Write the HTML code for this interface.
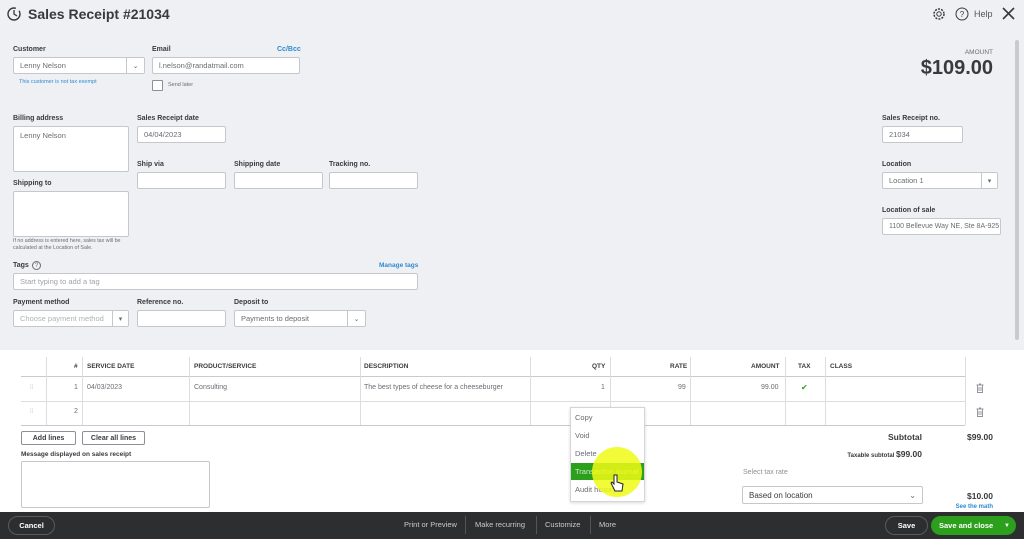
<!DOCTYPE html>
<html><head><meta charset="utf-8"><style>
*{margin:0;padding:0;box-sizing:border-box}
body{width:1024px;height:539px;overflow:hidden;position:relative;background:#fff;font-family:"Liberation Sans",sans-serif;color:#393a3d}
.a{position:absolute;white-space:nowrap}
.top{position:absolute;left:0;top:0;width:1024px;height:350px;background:#eff0f4}
.lbl{position:absolute;font-size:7px;font-weight:bold;color:#393a3d;white-space:nowrap}
.in{position:absolute;background:#fff;border:1px solid #c4c7cc;border-radius:2px;font-size:7.5px;color:#6b6c72;padding:0 6px;display:flex;align-items:center;white-space:nowrap;overflow:hidden}
.dd{position:absolute;top:0;bottom:0;right:0;border-left:1px solid #c4c7cc;display:flex;align-items:center;justify-content:center;font-size:7px;color:#6b6c72;background:#fff}
.th{position:absolute;font-size:6.5px;font-weight:bold;color:#393a3d;top:363px}
.td{position:absolute;font-size:7px;color:#6b6c72;white-space:nowrap}
.vl{position:absolute;width:1px;background:#dcdde0;top:357px;height:68px}
.hl{position:absolute;left:21px;width:944px;height:1px;background:#c8cacd}
.btn{position:absolute;border:1px solid #8d9096;border-radius:2px;font-size:7px;font-weight:bold;display:flex;align-items:center;justify-content:center;background:#fff}
.mi{position:absolute;left:575px;font-size:7.5px;color:#6b6c72;white-space:nowrap}
.ft{position:absolute;font-size:7.5px;color:#c9cacc;top:520px;white-space:nowrap}
.sep{position:absolute;top:516px;width:1px;height:18px;background:#555}
</style></head><body>
<div class="top"></div>
<svg class="a" style="left:6px;top:6px" width="16" height="16" viewBox="0 0 16 16"><circle cx="8" cy="8" r="6" fill="none" stroke="#393a3d" stroke-width="1.4" stroke-dasharray="30 4"/><path d="M8 4v4l3 2" fill="none" stroke="#393a3d" stroke-width="1.3"/></svg>
<div class="a" style="left:28px;top:6px;font-size:14px;font-weight:bold;color:#393a3d">Sales Receipt #21034</div>
<svg class="a" style="left:932px;top:7px" width="14" height="14" viewBox="0 0 14 14"><circle cx="7" cy="7" r="2.2" fill="none" stroke="#393a3d"/><circle cx="7" cy="7" r="5" fill="none" stroke="#393a3d" stroke-dasharray="2 1.2" stroke-width="1.5"/></svg>
<svg class="a" style="left:955px;top:7px" width="14" height="14" viewBox="0 0 14 14"><circle cx="7" cy="7" r="6" fill="none" stroke="#393a3d"/><text x="7" y="10" font-size="8" text-anchor="middle" fill="#393a3d" font-family="Liberation Sans">?</text></svg>
<div class="a" style="left:974px;top:9px;font-size:9px;color:#555">Help</div>
<svg class="a" style="left:1001px;top:6px" width="15" height="15" viewBox="0 0 15 15"><path d="M2 2L13 13M13 2L2 13" stroke="#393a3d" stroke-width="1.6"/></svg>
<div class="a" style="left:1015px;top:40px;width:4px;height:300px;background:#c9cacd;border-radius:2px"></div>

<div class="lbl" style="left:13px;top:46px">Customer</div>
<div class="in" style="left:13px;top:57px;width:132px;height:17px">Lenny Nelson<div class="dd" style="width:18px">⌄</div></div>
<div class="a" style="left:19px;top:79px;font-size:5.5px;color:#2f8bd0">This customer is not tax exempt</div>
<div class="lbl" style="left:152px;top:46px">Email</div>
<div class="a" style="left:277px;top:46px;font-size:7px;font-weight:bold;color:#2f8bd0">Cc/Bcc</div>
<div class="in" style="left:152px;top:57px;width:148px;height:17px">l.nelson@randatmail.com</div>
<div class="a" style="left:152px;top:80px;width:11px;height:11px;border:1px solid #8d9096;background:#fff;border-radius:1px"></div>
<div class="a" style="left:168px;top:82px;font-size:5.5px;color:#6b6c72">Send later</div>
<div class="a" style="right:31px;top:49px;font-size:6.5px;color:#6b6c72">AMOUNT</div>
<div class="a" style="right:31px;top:57px;font-size:20px;font-weight:bold;color:#393a3d">$109.00</div>

<div class="lbl" style="left:13px;top:115px">Billing address</div>
<div class="in" style="left:13px;top:126px;width:116px;height:46px;align-items:flex-start;padding-top:4px">Lenny Nelson</div>
<div class="lbl" style="left:137px;top:115px">Sales Receipt date</div>
<div class="in" style="left:137px;top:126px;width:89px;height:17px">04/04/2023</div>
<div class="lbl" style="left:137px;top:161px">Ship via</div>
<div class="in" style="left:137px;top:172px;width:89px;height:17px"></div>
<div class="lbl" style="left:234px;top:161px">Shipping date</div>
<div class="in" style="left:234px;top:172px;width:89px;height:17px"></div>
<div class="lbl" style="left:329px;top:161px">Tracking no.</div>
<div class="in" style="left:329px;top:172px;width:89px;height:17px"></div>
<div class="lbl" style="left:13px;top:180px">Shipping to</div>
<div class="in" style="left:13px;top:191px;width:116px;height:46px"></div>
<div class="a" style="left:13px;top:238px;font-size:5.3px;color:#6b6c72;line-height:7px">If no address is entered here, sales tax will be<br>calculated at the Location of Sale.</div>
<div class="lbl" style="left:13px;top:262px">Tags</div>
<div class="a" style="left:32px;top:261px;width:9px;height:9px;border:1px solid #6b6c72;border-radius:50%;font-size:6px;text-align:center;line-height:8px;color:#6b6c72">?</div>
<div class="a" style="left:379px;top:262px;font-size:6.5px;font-weight:bold;color:#2f8bd0">Manage tags</div>
<div class="in" style="left:13px;top:273px;width:405px;height:17px;color:#a0a2a6">Start typing to add a tag</div>
<div class="lbl" style="left:13px;top:299px">Payment method</div>
<div class="in" style="left:13px;top:310px;width:116px;height:17px;color:#b0b2b6">Choose payment method<div class="dd" style="width:16px">▾</div></div>
<div class="lbl" style="left:137px;top:299px">Reference no.</div>
<div class="in" style="left:137px;top:310px;width:89px;height:17px"></div>
<div class="lbl" style="left:234px;top:299px">Deposit to</div>
<div class="in" style="left:234px;top:310px;width:132px;height:17px">Payments to deposit<div class="dd" style="width:18px">⌄</div></div>

<div class="lbl" style="left:882px;top:115px">Sales Receipt no.</div>
<div class="in" style="left:882px;top:126px;width:81px;height:17px">21034</div>
<div class="lbl" style="left:882px;top:161px">Location</div>
<div class="in" style="left:882px;top:172px;width:116px;height:17px">Location 1<div class="dd" style="width:16px">▾</div></div>
<div class="lbl" style="left:882px;top:207px">Location of sale</div>
<div class="in" style="left:882px;top:218px;width:119px;height:17px;padding-right:0;font-size:7px">1100 Bellevue Way NE, Ste 8A-925</div>

<div class="hl" style="top:376px"></div>
<div class="hl" style="top:401px;background:#dcdde0"></div>
<div class="hl" style="top:425px"></div>
<div class="vl" style="left:46px"></div><div class="vl" style="left:82px"></div><div class="vl" style="left:189px"></div><div class="vl" style="left:360px"></div><div class="vl" style="left:530px"></div><div class="vl" style="left:610px"></div><div class="vl" style="left:690px"></div><div class="vl" style="left:785px"></div><div class="vl" style="left:825px"></div><div class="vl" style="left:965px"></div>
<div class="th" style="left:74px">#</div>
<div class="th" style="left:87px">SERVICE DATE</div>
<div class="th" style="left:194px">PRODUCT/SERVICE</div>
<div class="th" style="left:364px">DESCRIPTION</div>
<div class="th" style="left:592px">QTY</div>
<div class="th" style="left:670px">RATE</div>
<div class="th" style="left:751px">AMOUNT</div>
<div class="th" style="left:798px">TAX</div>
<div class="th" style="left:830px">CLASS</div>
<div class="td" style="left:30px;top:385px;font-size:6px;color:#bbb">⁞⁞</div>
<div class="td" style="left:74px;top:384px">1</div>
<div class="td" style="left:87px;top:384px">04/03/2023</div>
<div class="td" style="left:194px;top:384px">Consulting</div>
<div class="td" style="left:364px;top:384px">The best types of cheese for a cheeseburger</div>
<div class="td" style="left:601px;top:384px">1</div>
<div class="td" style="left:678px;top:384px">99</div>
<div class="td" style="left:761px;top:384px">99.00</div>
<div class="td" style="left:801px;top:383px;color:#2ca01c;font-size:8px">✔</div>
<div class="td" style="left:30px;top:409px;font-size:6px;color:#bbb">⁞⁞</div>
<div class="td" style="left:74px;top:408px">2</div>
<svg class="a" style="left:976px;top:383px" width="8" height="10" viewBox="0 0 8 10"><path d="M0.5 2h7M3 1h2M1.5 2v7.5h5V2M3 4v4M5 4v4" fill="none" stroke="#8d9096" stroke-width="0.9"/></svg>
<svg class="a" style="left:976px;top:407px" width="8" height="10" viewBox="0 0 8 10"><path d="M0.5 2h7M3 1h2M1.5 2v7.5h5V2M3 4v4M5 4v4" fill="none" stroke="#8d9096" stroke-width="0.9"/></svg>

<div class="btn" style="left:21px;top:431px;width:55px;height:14px">Add lines</div>
<div class="btn" style="left:82px;top:431px;width:63px;height:14px">Clear all lines</div>
<div class="lbl" style="left:21px;top:451px;font-size:6.5px">Message displayed on sales receipt</div>
<div class="in" style="left:21px;top:461px;width:189px;height:47px"></div>

<div class="a" style="right:102px;top:432px;font-size:8.5px;font-weight:bold">Subtotal</div>
<div class="a" style="right:31px;top:432px;font-size:8.5px;font-weight:bold">$99.00</div>
<div class="a" style="right:102px;top:449px;font-size:8.5px;font-weight:bold"><span style="font-size:6px">Taxable subtotal </span>$99.00</div>
<div class="a" style="left:743px;top:469px;font-size:7px;color:#8d9096">Select tax rate</div>
<div class="in" style="left:742px;top:486px;width:181px;height:18px;font-size:8px;color:#393a3d">Based on location<span style="position:absolute;right:6px;color:#6b6c72">⌄</span></div>
<div class="a" style="right:31px;top:491px;font-size:8.5px;font-weight:bold">$10.00</div>
<div class="a" style="right:31px;top:504px;font-size:6px;font-weight:bold;color:#2f8bd0">See the math</div>

<div class="a" style="left:570px;top:407px;width:75px;height:95px;background:#fff;border:1px solid #d4d5d8;box-shadow:0 1px 3px rgba(0,0,0,.15)"></div>
<div class="mi" style="top:413px">Copy</div>
<div class="mi" style="top:431px">Void</div>
<div class="mi" style="top:449px">Delete</div>
<div class="a" style="left:571px;top:463px;width:73px;height:17px;background:#2ca01c"></div>
<div class="mi" style="top:467px;color:#cfe8c9">Transaction journal</div>
<div class="mi" style="top:485px">Audit history</div>
<div class="a" style="left:592px;top:447px;width:50px;height:50px;border-radius:50%;background:rgba(240,250,20,.85)"></div>
<svg class="a" style="left:610px;top:473px" width="14" height="20" viewBox="0 0 14 20"><path d="M4 2v9L2 9 1 10l4 8h7l1-7-3-1-3-1V2z" fill="#fff" stroke="#222" stroke-width="1"/></svg>

<div class="a" style="left:0;top:512px;width:1024px;height:27px;background:#2d2e30"></div>
<div class="a" style="left:8px;top:516px;width:47px;height:19px;border:1px solid #5a5b5e;border-radius:10px;color:#fff;font-size:7.5px;font-weight:bold;display:flex;align-items:center;justify-content:center">Cancel</div>
<div class="ft" style="left:404px">Print or Preview</div>
<div class="sep" style="left:465px"></div>
<div class="ft" style="left:475px">Make recurring</div>
<div class="sep" style="left:536px"></div>
<div class="ft" style="left:545px">Customize</div>
<div class="sep" style="left:590px"></div>
<div class="ft" style="left:599px">More</div>
<div class="a" style="left:885px;top:516px;width:43px;height:19px;border:1px solid #5a5b5e;border-radius:10px;color:#fff;font-size:7.5px;font-weight:bold;display:flex;align-items:center;justify-content:center">Save</div>
<div class="a" style="left:931px;top:516px;width:85px;height:19px;background:#2ca01c;border-radius:10px;color:#fff;font-size:7.5px;font-weight:bold;display:flex;align-items:center;padding-left:8px">Save and close<span style="position:absolute;right:6px;font-size:6px">▼</span></div>
</body></html>
